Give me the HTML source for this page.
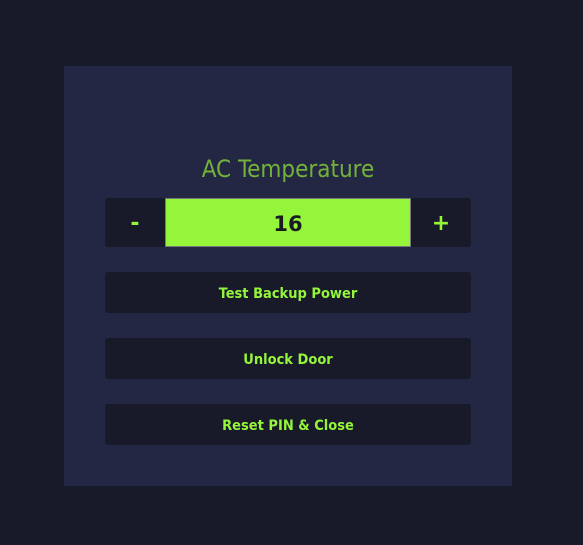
<!DOCTYPE html>
<html><head><style>
body{margin:0;width:583px;height:545px;background:#181929;font-family:"DejaVu Sans","Liberation Sans",sans-serif;position:relative;overflow:hidden}
.panel{position:absolute;left:64px;top:66px;width:448px;height:420px;background:#242743}
.t{position:absolute;left:0;width:448px;top:89px;text-align:center;font-size:24px;color:#73b23a;font-family:"DejaVu Sans Condensed","DejaVu Sans",sans-serif}
.row{position:absolute;left:41px;top:132px;width:366px;height:49px;background:#181929;border-radius:3px}
.pm{position:absolute;top:0;width:60px;height:49px;line-height:51px;text-align:center;color:#94f53a;font-size:22px;font-weight:bold}
.inp{position:absolute;left:60px;top:0;width:244px;height:47px;border:1px solid #777;background:#94f53a;text-align:center;line-height:51px;font-size:21px;font-weight:bold;color:#1a1a22}
.b{position:absolute;left:41px;width:366px;height:41px;background:#181929;border-radius:3px;text-align:center;line-height:44px;color:#94f53a;font-weight:bold;font-size:14.5px;font-family:"DejaVu Sans Condensed","DejaVu Sans",sans-serif}
</style></head><body>
<div class="panel">
<div class="t">AC Temperature</div>
<div class="row"><div class="pm" style="left:0">-</div><div class="inp">16</div><div class="pm" style="left:306px">+</div></div>
<div class="b" style="top:206px">Test Backup Power</div>
<div class="b" style="top:272px">Unlock Door</div>
<div class="b" style="top:338px">Reset PIN &amp; Close</div>
</div>
</body></html>
